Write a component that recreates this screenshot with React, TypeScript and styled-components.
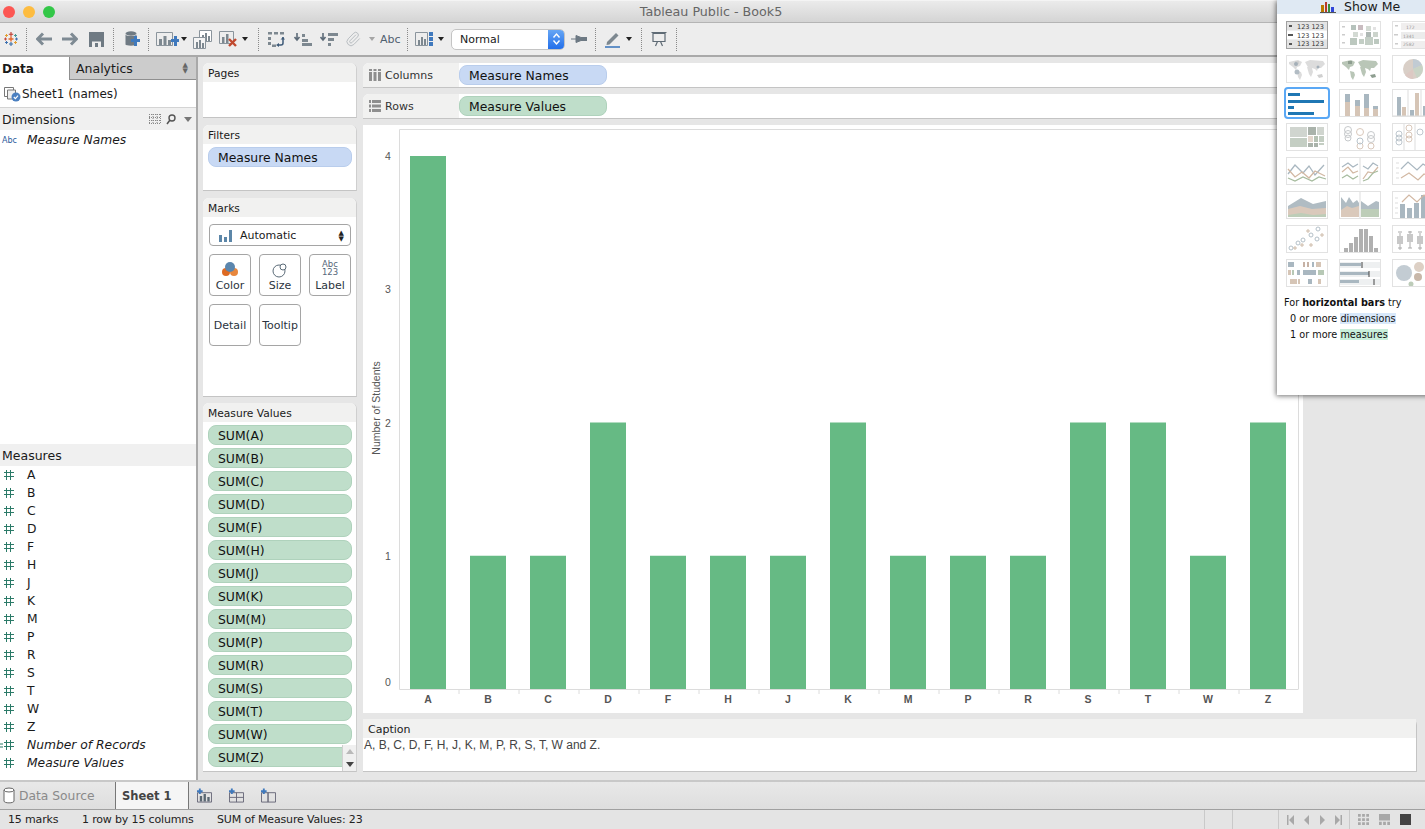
import React from "react";
import styled, { createGlobalStyle } from "styled-components";
import { Paperclip } from "lucide-react";

const Global = createGlobalStyle`
  html, body { margin: 0; padding: 0; height: 100%; overflow: hidden; }
  body { font-family: "DejaVu Sans", "Liberation Sans", sans-serif; color: #1a1a1a; background: #e6e6e6; }
  * { box-sizing: border-box; }
`;

const Page = styled.div`
  position: relative;
  width: 1425px;
  height: 829px;
  display: flex;
  flex-direction: column;
  overflow: hidden;
  background: #e6e6e6;
`;

const TitleBar = styled.div`
  height: 23px;
  flex: none;
  display: flex;
  align-items: center;
  justify-content: center;
  position: relative;
  padding-right: 3px;
  background: linear-gradient(#ebebeb, #d4d4d4);
  border-top: 1px solid #f4f4f4;
  border-bottom: 1px solid #b4b4b4;
  font-size: 12.7px;
  color: #666;
`;
const Lights = styled.div`
  position: absolute;
  left: 3px;
  top: 5px;
  display: flex;
  gap: 8px;
`;
const Light = styled.span<{ $c: string }>`
  width: 12px;
  height: 12px;
  border-radius: 50%;
  background: ${(p) => p.$c};
`;

const Toolbar = styled.div`
  height: 34px;
  flex: none;
  display: flex;
  align-items: center;
  padding-left: 3px;
  background: #ededed;
  border-bottom: 2px solid #a9a9a9;
`;
const Tool = styled.svg<{ $ml?: number }>`
  flex: none;
  margin-left: ${(p) => p.$ml ?? 0}px;
`;
const ClipTool = styled(Paperclip)`
  flex: none;
  margin-left: 7px;
  color: #b4b9bd;
`;
const Sep = styled.span<{ $ml: number }>`
  flex: none;
  width: 0;
  height: 23px;
  margin-left: ${(p) => p.$ml}px;
  border-left: 1px dotted #8a8a8a;
`;
const Caret = styled.span<{ $ml: number; $c?: string }>`
  flex: none;
  width: 0;
  height: 0;
  margin-left: ${(p) => p.$ml}px;
  border-left: 3.5px solid transparent;
  border-right: 3.5px solid transparent;
  border-top: 4px solid ${(p) => p.$c ?? "#222"};
`;
const AbcTool = styled.span`
  flex: none;
  margin-left: 5px;
  font-size: 11px;
  color: #50606f;
  width: 27px;
`;
const FitSelect = styled.div`
  flex: none;
  margin-left: 7px;
  width: 114px;
  height: 21px;
  display: flex;
  align-items: center;
  justify-content: space-between;
  background: #fff;
  border: 1px solid #c4c4c4;
  border-radius: 5px;
  font-size: 11px;
  padding-left: 8px;
  overflow: hidden;
`;
const FitStepper = styled.span`
  width: 17px;
  height: 21px;
  margin-right: -1px;
  background: linear-gradient(#6aa9f5, #1f6cea);
  display: flex;
  align-items: center;
  justify-content: center;
`;

const Body = styled.div`
  flex: 1;
  min-height: 0;
  display: flex;
`;

const Side = styled.div`
  width: 198px;
  flex: none;
  display: flex;
  flex-direction: column;
  background: #fff;
  border-right: 2px solid #a9a9a9;
`;
const Tabs = styled.div`
  height: 23px;
  flex: none;
  display: flex;
  background: #b9b9b9;
`;
const DataTab = styled.div`
  width: 69px;
  background: #fff;
  font-weight: 700;
  font-size: 12px;
  padding: 5px 0 0 2px;
`;
const AnalyticsTab = styled.div`
  flex: 1;
  display: flex;
  justify-content: space-between;
  font-size: 12.5px;
  padding: 4px 8px 0 6px;
  background: #cccccc;
  border-left: 1px solid #8f8f8f;
  border-bottom: 1px solid #8f8f8f;
`;
const UpDown = styled.span`
  font-size: 7px;
  line-height: 6px;
  color: #666;
  margin-top: 1px;
  white-space: pre;
`;
const SourceRow = styled.div`
  height: 28px;
  flex: none;
  display: flex;
  align-items: center;
  gap: 1px;
  padding: 0 0 0 3px;
  font-size: 12px;
  border-bottom: 1px solid #d4d4d4;
`;
const SectionHead = styled.div`
  height: 22px;
  flex: none;
  display: flex;
  align-items: center;
  padding-left: 2px;
  background: #f0f0f0;
  font-size: 12.5px;
  gap: 5px;
`;
const HeadGrow = styled.span`
  flex: 1;
`;
const DimList = styled.div`
  height: 314px;
  flex: none;
  padding-top: 1px;
`;
const FieldRow = styled.div`
  height: 18px;
  display: flex;
  align-items: center;
  font-size: 12.3px;
`;
const FieldIcon = styled.span`
  width: 27px;
  flex: none;
  padding-left: 3px;
  display: flex;
  align-items: center;
`;
const RecordIcon = styled(FieldIcon)`
  padding-left: 0;
`;
const AbcMark = styled.span`
  font-size: 8px;
  margin-left: -1px;
  color: #2a5a9b;
`;
const FieldName = styled.span<{ $i?: boolean }>`
  font-style: ${(p) => (p.$i ? "italic" : "normal")};
`;

const ShelvesCol = styled.div`
  width: 165px;
  flex: none;
  display: flex;
  flex-direction: column;
  padding: 6px 6px 0 5px;
  background: #e6e6e6;
`;
const Card = styled.div<{ $h: number; $mt: number }>`
  height: ${(p) => p.$h}px;
  margin-top: ${(p) => p.$mt}px;
  flex: none;
  background: #fff;
  border-radius: 6px 6px 0 0;
  border-right: 1px solid #cfcfcf;
  border-bottom: 1px solid #c4c4c4;
  overflow: hidden;
  position: relative;
`;
const CardHead = styled.div`
  height: 19px;
  background: #f1f1f0;
  font-size: 10.7px;
  padding: 4px 0 0 5px;
`;
const Pill = styled.div<{ $blue?: boolean; $w?: number }>`
  width: ${(p) => (p.$w ? `${p.$w}px` : "144px")};
  height: 20px;
  flex: none;
  border-radius: 8px;
  display: flex;
  align-items: center;
  padding-left: 9px;
  font-size: 12.4px;
  color: #111;
  background: ${(p) => (p.$blue ? "#c8d9f4" : "#bfdeca")};
  border: 1px solid ${(p) => (p.$blue ? "#b9cdec" : "#afd2bc")};
`;
const FilterBody = styled.div`
  padding: 3px 0 0 5px;
`;
const MarksBody = styled.div`
  padding: 7px 5px 0 6px;
  display: flex;
  flex-direction: column;
`;
const MarkType = styled.div`
  width: 142px;
  height: 22px;
  border: 1px solid #a5a5a5;
  border-radius: 4px;
  display: flex;
  align-items: center;
  padding: 1px 6px 0 9px;
  font-size: 11px;
  gap: 8px;
`;
const MarkGrid = styled.div`
  display: grid;
  grid-template-columns: repeat(3, 42px);
  grid-auto-rows: 42px;
  gap: 8px;
  margin-top: 8px;
`;
const MarkBtn = styled.div`
  border: 1px solid #a5a5a5;
  border-radius: 4px;
  display: flex;
  flex-direction: column;
  align-items: center;
  justify-content: flex-end;
  padding-bottom: 3px;
  font-size: 11px;
  color: #2b3440;
  white-space: nowrap;
`;
const MarkBtnPlain = styled(MarkBtn)`
  justify-content: center;
  padding-bottom: 0;
`;
const AbcStack = styled.span`
  font-size: 8.5px;
  line-height: 8px;
  text-align: center;
  color: #56677a;
  margin-bottom: 3px;
`;
const PillStack = styled.div`
  padding: 3px 0 0 5px;
  display: flex;
  flex-direction: column;
  gap: 3px;
`;
const ScrollBar = styled.div`
  position: absolute;
  right: 0;
  bottom: 0;
  width: 14px;
  height: 26px;
  background: #f0f0f0;
  border-left: 1px solid #d0d0d0;
  display: flex;
  flex-direction: column;
  align-items: center;
  justify-content: space-around;
`;
const Arrow = styled.span<{ $up?: boolean; $c: string }>`
  width: 0;
  height: 0;
  border-left: 4px solid transparent;
  border-right: 4px solid transparent;
  ${(p) => (p.$up ? "border-bottom" : "border-top")}: 5px solid ${(p) => p.$c};
`;

const Main = styled.div`
  flex: 1;
  min-width: 0;
  display: flex;
  flex-direction: column;
  padding: 6px 8px 0 0;
`;
const ShelfBar = styled.div<{ $mt?: number }>`
  height: 25px;
  flex: none;
  margin-top: ${(p) => p.$mt ?? 0}px;
  display: flex;
  align-items: center;
  background: #fff;
  border-bottom: 1px solid #c4c4c4;
  border-radius: 6px 6px 0 0;
`;
const ShelfLabel = styled.div`
  width: 96px;
  height: 100%;
  flex: none;
  background: #f1f1f0;
  display: flex;
  align-items: center;
  padding-left: 6px;
  gap: 4px;
  font-size: 11px;
  color: #333;
  border-radius: 6px 0 0 0;
`;
const ChartBox = styled.div`
  width: 940px;
  height: 588px;
  flex: none;
  margin-top: 6px;
  background: #fff;
`;
const ChartText = styled.text<{ $b?: boolean }>`
  font-family: "Liberation Sans", Arial, sans-serif;
  font-size: 10.5px;
  font-weight: ${(p) => (p.$b ? 700 : 400)};
  fill: #555;
`;
const CaptionCard = styled.div`
  height: 53px;
  flex: none;
  margin-top: 6px;
  background: #fff;
  border-radius: 0 6px 0 0;
  border-right: 1px solid #c4c4c4;
  border-bottom: 1px solid #c4c4c4;
`;
const CaptionHead = styled.div`
  height: 19px;
  background: #f1f1f0;
  font-size: 11px;
  padding: 4px 0 0 5px;
`;
const CaptionText = styled.div`
  font-family: "Liberation Sans", Arial, sans-serif;
  font-size: 12px;
  color: #444;
  padding: 0 0 0 1px;
`;

const TabBar = styled.div`
  height: 30px;
  flex: none;
  display: flex;
  align-items: stretch;
  background: linear-gradient(#e8e8e8, #dedede);
  border-top: 2px solid #c8c8c8;
  border-bottom: 1px solid #a0a0a0;
`;
const SourceTab = styled.div`
  width: 115px;
  display: flex;
  align-items: center;
  gap: 4px;
  padding-left: 3px;
  font-size: 12.3px;
  color: #8a8a8a;
`;
const SheetTab = styled.div`
  width: 74px;
  display: flex;
  align-items: center;
  padding-left: 6px;
  font-size: 11.5px;
  font-weight: 700;
  color: #444;
  background: #f5f5f5;
  border-left: 1px solid #777;
  border-right: 1px solid #777;
`;
const SheetActions = styled.div`
  display: flex;
  align-items: center;
  padding-left: 8px;
  gap: 17px;
`;
const StatusBar = styled.div`
  height: 19px;
  flex: none;
  display: flex;
  align-items: center;
  background: #e4e4e4;
  font-size: 11px;
  color: #222;
  letter-spacing: -0.16px;
`;
const StatusItem = styled.span<{ $w: number; $pl?: number }>`
  width: ${(p) => p.$w}px;
  padding-left: ${(p) => p.$pl ?? 0}px;
  flex: none;
`;
const StatusCell = styled.span<{ $w: number; $pl: number; $gap: number }>`
  width: ${(p) => p.$w}px;
  height: 100%;
  flex: none;
  border-left: 1px solid #c9c9c9;
  display: flex;
  align-items: center;
  padding-left: ${(p) => p.$pl}px;
  gap: ${(p) => p.$gap}px;
`;

const ShowMe = styled.div`
  position: absolute;
  left: 1277px;
  top: 0;
  width: 160px;
  height: 395px;
  background: #fff;
  box-shadow: -1px 1px 5px rgba(0, 0, 0, 0.55);
`;
const ShowMeHead = styled.div`
  height: 14px;
  background: #dfe9f3;
  display: flex;
  align-items: flex-end;
  padding-left: 43px;
  gap: 8px;
  font-size: 12.5px;
  line-height: 15px;
  white-space: nowrap;
`;
const ThumbGrid = styled.div`
  display: grid;
  grid-template-columns: repeat(3, 42px);
  grid-auto-rows: 28px;
  column-gap: 11px;
  row-gap: 6px;
  padding: 7px 0 0 9px;
`;
const Thumb = styled.div<{ $active?: boolean; $first?: boolean }>`
  width: 42px;
  height: 28px;
  background: #fff;
  border: ${(p) => (p.$first ? "1px solid #a0a0a0" : "1px solid #e2e2e2")};
  ${(p) => p.$active && "outline: 2px solid #5aa8f5; outline-offset: 0; border-radius: 2px; border-color: #fff;"}
  overflow: hidden;
`;
const HintBlock = styled.div`
  padding: 8px 0 0 7px;
  font-size: 9.7px;
  line-height: 16px;
  color: #111;
  white-space: nowrap;
`;
const HintLine = styled.div`
  padding-left: 6px;
`;
const DimMark = styled.span`
  background: #d8e8fa;
`;
const MeasMark = styled.span`
  background: #c9eedb;
`;

const Hash = () => (
  <svg width="12" height="12" viewBox="0 0 12 12" style={{ flex: "none" }}>
    <path d="M3.500 1v10M7.500 1v10M1 3.500h10M1 7.500h10" stroke="#2b7a68" strokeWidth="1" fill="none" />
  </svg>
);

const thumbColors = { b: "#a9b7c0", t: "#d6c5b6", g: "#b7c8b5", l: "#d9d9d9" };

const ThumbSvg: React.FC<{ children: React.ReactNode }> = ({ children }) => (
  <svg width={40} height={26} viewBox="0 0 40 26" style={{ display: "block" }}>
    {children}
  </svg>
);

const Continents = ({ c, c2 }: { c: string; c2: string }) => (
  <>
    <path d="M2 6l9-2 4 2-2 4-3 1-1 3-3-3-4-3zM10 15l4 1 1 3-2 5-2-3zM18 6l5-2 13 1 2 3-4 4-3 0-1 3-2-2-3-1-3 1zM20 11l5 1 1 4-2 5-2-3z" fill={c} />
    <path d="M30 19l5-1 1 3-4 1zM8 5l4 0 0 3-4 0z" fill={c2} />
  </>
);

const thumbs: React.ReactNode[] = [
  <ThumbSvg>
    <rect x="0" y="0" width="40" height="8.6" fill="#e4e4e4" />
    <rect x="0" y="17.4" width="40" height="8.6" fill="#e4e4e4" />
    <rect x="2" y="3" width="3" height="2" fill="#555" />
    <rect x="1" y="12" width="5" height="2" fill="#555" />
    <rect x="2" y="21" width="3" height="2" fill="#555" />
    <text x="10" y="7" fontSize="6.5" fill="#333" fontFamily="DejaVu Sans">123 123</text>
    <text x="10" y="15.500" fontSize="6.5" fill="#333" fontFamily="DejaVu Sans">123 123</text>
    <text x="10" y="24" fontSize="6.5" fill="#333" fontFamily="DejaVu Sans">123 123</text>
  </ThumbSvg>,
  <ThumbSvg>
    {[
      [11, 3, 5, "#b6c2bc"], [18, 3, 5, "#c9bcc0"], [26, 4, 5, "#d3dad3"], [33, 5, 3, "#e2e2e2"],
      [13, 10, 5, "#d3dad3"], [20, 11, 3, "#e2e2e2"], [26, 10, 5, "#aeb8b4"], [33, 10, 5, "#ccd4cc"],
      [10, 16, 7, "#bcc8bf"], [19, 17, 5, "#c3cec5"], [25, 15, 8, "#c3cec5"], [34, 17, 5, "#bcc8bf"],
    ].map(([x, y, s, c], i) => (
      <rect key={i} x={x as number} y={y as number} width={s as number} height={s as number} fill={c as string} />
    ))}
    <rect x="2" y="4" width="3" height="1.500" fill="#ccc" />
    <rect x="2" y="12" width="3" height="1.500" fill="#ccc" />
    <rect x="2" y="20" width="3" height="1.500" fill="#ccc" />
  </ThumbSvg>,
  <ThumbSvg>
    <rect x="8" y="1" width="32" height="7" fill="#f0eeee" />
    <rect x="8" y="10" width="32" height="7" fill="#ececec" />
    <rect x="8" y="19" width="32" height="7" fill="#f0eeee" />
    <text x="13" y="7" fontSize="4.5" fill="#999" fontFamily="DejaVu Sans">172</text>
    <text x="10" y="15.500" fontSize="4.5" fill="#999" fontFamily="DejaVu Sans">1341</text>
    <text x="10" y="24" fontSize="4.5" fill="#999" fontFamily="DejaVu Sans">2582</text>
    <rect x="2" y="3" width="3" height="1.500" fill="#ccc" />
    <rect x="1" y="12" width="4" height="1.500" fill="#ccc" />
    <rect x="2" y="21" width="3" height="1.500" fill="#ccc" />
  </ThumbSvg>,
  <ThumbSvg>
    <Continents c="#dcdcdc" c2="#d0d0d0" />
    <circle cx="9" cy="8" r="2" fill="#a4afb8" />
    <circle cx="10" cy="16" r="2.500" fill="#b2bcc4" />
    <circle cx="31" cy="11" r="1.500" fill="#a4afb8" />
  </ThumbSvg>,
  <ThumbSvg>
    <Continents c="#b9c6b7" c2="#8e9e90" />
  </ThumbSvg>,
  <ThumbSvg>
    <circle cx="20" cy="13" r="10" fill="#d9cfc7" />
    <path d="M20 13V3a10 10 0 0 1 9 6z" fill="#c1cbd3" />
    <path d="M20 13l9-4a10 10 0 0 1-5 13z" fill="#c9d4c6" />
    <path d="M20 13v10a10 10 0 0 1-8-4z" fill="#dcc9c3" />
  </ThumbSvg>,
  <ThumbSvg>
    <rect x="1" y="3" width="12" height="3" fill="#1f77b4" />
    <rect x="1" y="10" width="36" height="3" fill="#1f77b4" />
    <rect x="1" y="16" width="6" height="3" fill="#1f77b4" />
    <rect x="1" y="22" width="26" height="3" fill="#1f77b4" />
  </ThumbSvg>,
  <ThumbSvg>
    {[[5, 4, 8, 14], [15, 10, 6, 10], [24, 4, 14, 8], [33, 16, 3, 7]].map(([x, y, a, b], i) => (
      <g key={i}>
        <rect x={x} y={y} width="5" height={a} fill={thumbColors.b} />
        <rect x={x} y={y + a} width="5" height={b} fill={thumbColors.t} />
      </g>
    ))}
  </ThumbSvg>,
  <ThumbSvg>
    <rect x="4" y="7" width="4" height="19" fill={thumbColors.b} />
    <rect x="9" y="17" width="4" height="9" fill={thumbColors.t} />
    <rect x="17" y="20" width="4" height="6" fill={thumbColors.b} />
    <rect x="22" y="3" width="4" height="23" fill={thumbColors.t} />
    <rect x="30" y="16" width="4" height="10" fill={thumbColors.b} />
    <path d="M0 26h40M15 0v26M28 0v26" stroke="#ddd" />
  </ThumbSvg>,
  <ThumbSvg>
    <rect x="3" y="3" width="17" height="10" fill="#d0d5cf" />
    <rect x="21" y="3" width="8" height="8" fill="#aab3ab" />
    <rect x="30" y="3" width="7" height="8" fill="#d0d5cf" />
    <rect x="3" y="14" width="17" height="9" fill="#c4cec3" />
    <rect x="21" y="12" width="5" height="6" fill="#e3d7cd" />
    <rect x="27" y="12" width="4" height="6" fill="#b6c2b4" />
    <rect x="32" y="12" width="5" height="6" fill="#c4cec3" />
    <rect x="21" y="19" width="5" height="4" fill="#aab3ab" />
    <rect x="27" y="19" width="4" height="4" fill="#aab3ab" />
    <rect x="32" y="19" width="5" height="2" fill="#c4cec3" />
  </ThumbSvg>,
  <ThumbSvg>
    <g fill="none" stroke="#c6c9cb" strokeWidth="1">
      <circle cx="8" cy="6" r="3.500" /><circle cx="8" cy="10" r="3.500" /><circle cx="8" cy="14" r="3" />
      <circle cx="31" cy="11" r="3.500" /><circle cx="31" cy="15" r="3.500" />
    </g>
    <g fill="none" stroke="#d9c8bb" strokeWidth="1">
      <circle cx="20" cy="8" r="3.500" /><circle cx="20" cy="22" r="3" /><circle cx="31" cy="22" r="3" />
    </g>
    <circle cx="20" cy="17" r="3" fill="none" stroke="#b8c4cc" />
  </ThumbSvg>,
  <ThumbSvg>
    <g fill="none" stroke="#bfc8cf" strokeWidth="1">
      <circle cx="6" cy="10" r="3" /><circle cx="6" cy="14" r="3" /><circle cx="6" cy="18" r="3" /><circle cx="27" cy="8" r="3" />
    </g>
    <g fill="none" stroke="#d9c8bb" strokeWidth="1">
      <circle cx="16" cy="4" r="3" /><circle cx="16" cy="11" r="3" /><circle cx="16" cy="15" r="3" />
    </g>
    <path d="M11 0v26M22 0v26" stroke="#ddd" />
  </ThumbSvg>,
  <ThumbSvg>
    <path d="M1 16l7-9 8 8 6-7 6 9 9-10" fill="none" stroke={thumbColors.b} strokeWidth="1.300" />
    <path d="M1 11l7 8 7-5 7 6 6-7 10 5" fill="none" stroke="#d2b8a3" strokeWidth="1.300" />
    <path d="M1 20l7 3 8-4 9 4 7-4 7 2" fill="none" stroke="#a7bc9f" strokeWidth="1.300" />
  </ThumbSvg>,
  <ThumbSvg>
    <path d="M20 0v26" stroke="#ddd" />
    <path d="M2 9l6-4 5 4 5-3" fill="none" stroke={thumbColors.b} strokeWidth="1.200" />
    <path d="M2 14l6-5 5 6 5-2" fill="none" stroke="#d2b8a3" strokeWidth="1.200" />
    <path d="M2 20l5-3 6 4 5-3" fill="none" stroke="#a7bc9f" strokeWidth="1.200" />
    <path d="M23 8l5 3 5-6 5 3" fill="none" stroke={thumbColors.b} strokeWidth="1.200" />
    <path d="M23 21l5-7 5 1 5-6" fill="none" stroke="#d2b8a3" strokeWidth="1.200" />
    <path d="M23 23l5-2 5-6 5-2" fill="none" stroke="#a7bc9f" strokeWidth="1.200" />
  </ThumbSvg>,
  <ThumbSvg>
    <path d="M8 11l7-7 9 8 6-6 10 6" fill="none" stroke={thumbColors.b} strokeWidth="1.200" />
    <path d="M8 20l8-5 9 7 6-6 9 4" fill="none" stroke="#d2b8a3" strokeWidth="1.200" />
    <path d="M3 5h3M3 10h3M3 15h3M3 20h3" stroke="#ddd" />
  </ThumbSvg>,
  <ThumbSvg>
    <path d="M1 14l13-8 12 6 13-3v16H1z" fill="#b0bcc3" />
    <path d="M1 17l12-3 12 3 14-1v9H1z" fill="#dac9bb" />
    <path d="M1 23l13-2 12 2 13-1v3H1z" fill="#bdcdb8" />
  </ThumbSvg>,
  <ThumbSvg>
    <path d="M1 5l5 6 3-6 4 6 4-3 2 3v14H1z" fill="#b0bcc3" />
    <path d="M1 18l6-4 5 2 7-2v11H1z" fill="#dac9bb" />
    <path d="M21 9l7 5 8-5 3 1v15H21z" fill="#b0bcc3" />
    <path d="M21 17h18v8H21z" fill="#bdcdb8" />
    <path d="M20 0v26" stroke="#ddd" />
  </ThumbSvg>,
  <ThumbSvg>
    <path d="M2 6h3M2 11h3M2 16h3M2 21h3" stroke="#ddd" />
    <rect x="7" y="12" width="5" height="14" fill="#a9b7c0" />
    <rect x="14" y="16" width="5" height="10" fill="#a9b7c0" />
    <rect x="21" y="11" width="5" height="15" fill="#a9b7c0" />
    <rect x="28" y="3" width="5" height="23" fill="#a9b7c0" />
    <path d="M9 10l7-7 8 7 7-7 8 7" fill="none" stroke="#d2b8a3" strokeWidth="1.200" />
  </ThumbSvg>,
  <ThumbSvg>
    <g fill="none" stroke="#b4c0c8">
      <circle cx="4" cy="22" r="2" /><circle cx="11" cy="17" r="2" /><circle cx="16" cy="14" r="2" />
      <circle cx="24" cy="9" r="2" /><circle cx="30" cy="13" r="2" /><circle cx="31" cy="3" r="2" />
    </g>
    <path d="M6 22h4M8 20v4M13 19h4M15 17v4M22 19h4M24 17v4M19 5h4M21 3v4M33 9h4M35 7v4" stroke="#cdbba9" fill="none" />
  </ThumbSvg>,
  <ThumbSvg>
    {[[6, 22], [11, 17], [16, 11], [21, 3], [26, 3], [31, 10], [36, 22]].map(([x, y], i) => (
      <rect key={i} x={x - 2} y={y} width="4" height={26 - y} fill="#b0b0b0" />
    ))}
  </ThumbSvg>,
  <ThumbSvg>
    {[7, 17, 27, 37].map((x, i) => (
      <g key={x}>
        <path d={`M${x} ${i % 2 ? 5 : 7}v17M${x - 2} 6h4M${x - 2} 22h4`} stroke="#aaa" />
        <rect x={x - 3} y={i % 2 ? 8 : 10} width="6" height="8" fill="#c8c8c8" />
      </g>
    ))}
  </ThumbSvg>,
  <ThumbSvg>
    {[
      [1, 2, 6, "#a9b7c0"], [16, 2, 2, "#c7b2a5"], [20, 2, 2, "#c7b2a5"], [25, 2, 2, "#a9b7c0"], [29, 2, 5, "#d6c5b6"],
      [1, 10, 3, "#d6c5b6"], [5, 10, 2, "#b7c8b5"], [10, 10, 3, "#a9b7c0"], [16, 10, 13, "#a9b7c0"], [31, 10, 6, "#b7c8b5"],
      [3, 19, 7, "#d6c5b6"], [11, 19, 2, "#d6c5b6"], [21, 19, 4, "#a9b7c0"], [31, 19, 3, "#d6c5b6"],
    ].map(([x, y, w, c], i) => (
      <rect key={i} x={x as number} y={y as number} width={w as number} height="5" fill={c as string} />
    ))}
  </ThumbSvg>,
  <ThumbSvg>
    <rect x="0" y="2" width="40" height="6" fill="#eef0f1" />
    <rect x="0" y="11" width="40" height="6" fill="#eef0f1" />
    <rect x="0" y="19" width="40" height="6" fill="#eef0f1" />
    <rect x="0" y="3" width="21" height="3" fill="#a9b7c0" />
    <rect x="0" y="12" width="29" height="3" fill="#a9b7c0" />
    <rect x="0" y="20" width="19" height="3" fill="#a9b7c0" />
    <path d="M22 2v6M29 11v6M34 19v6" stroke="#444" />
  </ThumbSvg>,
  <ThumbSvg>
    <circle cx="11" cy="13" r="8" fill="#c3ccd3" />
    <circle cx="26" cy="7" r="5" fill="#ddd0c5" />
    <circle cx="25" cy="17" r="4" fill="#c8b7a9" />
    <circle cx="18" cy="24" r="2.500" fill="#bdccb9" />
    <circle cx="36" cy="13" r="4" fill="#bdccb9" />
  </ThumbSvg>,
];

const chartData: [string, number][] = [
  ["A", 4], ["B", 1], ["C", 1], ["D", 2], ["F", 1], ["H", 1], ["J", 1], ["K", 2],
  ["M", 1], ["P", 1], ["R", 1], ["S", 2], ["T", 2], ["W", 1], ["Z", 2],
];
const measures = ["A", "B", "C", "D", "F", "H", "J", "K", "M", "P", "R", "S", "T", "W", "Z"];

const Chart = () => {
  const y0 = 564;
  const unit = 133.25;
  return (
    <svg width="940" height="588" viewBox="0 0 940 588" style={{ display: "block" }}>
      <path d="M36.500 4.500H935.500V564M36.500 4.500V564.500H935.500" fill="none" stroke="#dcdcdc" />
      {chartData.map(([l, v], i) => (
        <g key={l}>
          <rect x={47 + i * 60} y={y0 - v * unit} width="36" height={v * unit} fill="#66ba84" />
          <ChartText $b x={65 + i * 60} y={578} textAnchor="middle">{l}</ChartText>
          {i > 0 && <path d={`M${36 + i * 60} 564v5`} stroke="#dcdcdc" />}
        </g>
      ))}
      {[0, 1, 2, 3, 4].map((t) => (
        <ChartText key={t} x={25} y={t === 0 ? 561 : y0 - t * unit + 4} textAnchor="middle">{t}</ChartText>
      ))}
      <ChartText x={0} y={0} textAnchor="middle" transform="translate(17 283) rotate(-90)">Number of Students</ChartText>
    </svg>
  );
};

const App: React.FC = () => (
  <Page>
    <Global />
    <TitleBar>
      <Lights>
        <Light $c="#fc5753" />
        <Light $c="#fdbc40" />
        <Light $c="#33c748" />
      </Lights>
      Tableau Public - Book5
    </TitleBar>
    <Toolbar>
      <Tool width="16" height="16" viewBox="0 0 16 16">
        <path d="M8 1v4.500M5.800 3.200h4.400" stroke="#c0392b" strokeWidth="1.100" />
        <path d="M3.500 3v3M2 4.500h3" stroke="#e3a032" strokeWidth="1" />
        <path d="M12.500 3v3M11 4.500h3" stroke="#4a9a94" strokeWidth="1" />
        <path d="M8 5.500v5M5.500 8h5" stroke="#e8682a" strokeWidth="1.400" />
        <path d="M2.500 6.500v3M1 8h3" stroke="#c44a3a" strokeWidth="1" />
        <path d="M13.500 6.500v3M12 8h3" stroke="#3f72b0" strokeWidth="1" />
        <path d="M3.500 10v3M2 11.500h3" stroke="#3f72b0" strokeWidth="1" />
        <path d="M12.500 10v3M11 11.500h3" stroke="#e3a032" strokeWidth="1" />
        <path d="M8 11v4M6 13h4" stroke="#3a6fa8" strokeWidth="1.100" />
      </Tool>
      <Sep $ml={7} />
      <Tool $ml={9} width="16" height="14" viewBox="0 0 16 14">
        <path d="M7 1.500L1.500 7 7 12.500M2 7h14" fill="none" stroke="#7e8a93" strokeWidth="3" />
      </Tool>
      <Tool $ml={10} width="16" height="14" viewBox="0 0 16 14">
        <path d="M9 1.500L14.500 7 9 12.500M14 7H0" fill="none" stroke="#7e8a93" strokeWidth="3" />
      </Tool>
      <Tool $ml={11} width="15" height="15" viewBox="0 0 15 15">
        <path d="M0 0h15v15H0z" fill="#6f7a83" />
        <path d="M3 9.500h9V15H3z" fill="#eee" />
        <path d="M6 11h3v4H6z" fill="#6f7a83" />
      </Tool>
      <Sep $ml={9} />
      <Tool $ml={11} width="15" height="17" viewBox="0 0 15 17">
        <ellipse cx="6" cy="2.500" rx="5.500" ry="2.200" fill="#6f7a83" />
        <path d="M.5 3.500v10c0 1.500 11 1.500 11 0v-10c-1 2-10 2-11 0z" fill="#6f7a83" />
        <path d="M9 8V5h3v3h3v3h-3v4H9v-4H6V8z" fill="#3f79bd" />
      </Tool>
      <Sep $ml={8} />
      <Tool $ml={7} width="23" height="17" viewBox="0 0 23 17">
        <path d="M.5 1.500h16v13H.5z" fill="none" stroke="#8a949c" />
        <path d="M3 8h3v6H3zM7.500 5h3v9h-3zM12 9h3v5h-3z" fill="#7d8890" />
        <path d="M15 8h3V5h3v3h2v3h-2v4h-3v-4h-3z" fill="#3f79bd" />
      </Tool>
      <Caret $ml={2} />
      <Tool $ml={6} width="19" height="19" viewBox="0 0 19 19">
        <path d="M6.500.5h12v11h-12z" fill="#fff" stroke="#8a949c" />
        <path d="M9 5h2v6H9zM12 3h2v8h-2zM15 6h2v5h-2z" fill="#7d8890" />
        <path d="M.5 7.500h12v11H.5z" fill="#f4f4f4" stroke="#8a949c" />
        <path d="M3 12h2v6H3zM6 10h2v8H6zM9 13h2v5H9z" fill="#7d8890" />
      </Tool>
      <Tool $ml={7} width="19" height="18" viewBox="0 0 19 18">
        <path d="M.5 1.500h14v12H.5z" fill="none" stroke="#8a949c" />
        <path d="M3 7h2.500v6H3zM7 4h2.500v9H7z" fill="#7d8890" />
        <path d="M10 9l7 7M17 9l-7 7" stroke="#c0492f" strokeWidth="2.400" />
      </Tool>
      <Caret $ml={4} />
      <Sep $ml={10} />
      <Tool $ml={8} width="18" height="17" viewBox="0 0 18 17">
        <path d="M1 1h4v2.500H1zM7 1h4v2.500H7zM13 1h4v2.500h-4zM1 6h3v3H1zM1 11h3v3H1zM5 13.500h4v2.500H5z" fill="#7d8890" />
        <path d="M16 6v6c0 1-1 2-2 2h-3" fill="none" stroke="#3e5a78" strokeWidth="1.500" />
        <path d="M13.500 8.500l2.500-2.500 2 2.500zM9 14l3-2v4z" fill="#3e5a78" />
      </Tool>
      <Tool $ml={9} width="18" height="15" viewBox="0 0 18 15">
        <path d="M3 1v7M0.500 5L3 8l2.500-3" fill="none" stroke="#5d6b78" strokeWidth="1.600" />
        <path d="M8 2h3v3H8zM8 7h6v3H8zM8 11h10v3H8z" fill="#7d8890" />
      </Tool>
      <Tool $ml={8} width="18" height="15" viewBox="0 0 18 15">
        <path d="M3 1v7M0.500 5L3 8l2.500-3" fill="none" stroke="#5d6b78" strokeWidth="1.600" />
        <path d="M8 1h10v3H8zM8 6h6v3H8zM8 11h3v3H8z" fill="#7d8890" />
      </Tool>
      <ClipTool size={16} strokeWidth={1.4} />
      <Caret $ml={8} $c="#a5a5a5" />
      <AbcTool>Abc</AbcTool>
      <Sep $ml={0} />
      <Tool $ml={7} width="19" height="16" viewBox="0 0 19 16">
        <path d="M.5 1.500h12v13H.5z" fill="none" stroke="#8a949c" />
        <path d="M3 9h2v5H3zM6 6h2v8H6zM9 8h2v6H9z" fill="#7d8890" />
        <path d="M14 1h4v4h-4zM14 6h4v4h-4zM14 11h4v4h-4z" fill="#3f79bd" />
      </Tool>
      <Caret $ml={4} />
      <FitSelect>
        Normal
        <FitStepper>
          <svg width="9" height="14" viewBox="0 0 9 14">
            <path d="M1.500 5.500L4.500 2l3 3.500M1.500 8.500l3 3.500 3-3.500" fill="none" stroke="#fff" strokeWidth="1.400" />
          </svg>
        </FitStepper>
      </FitSelect>
      <Tool $ml={6} width="16" height="10" viewBox="0 0 16 10">
        <path d="M0 5h5M5 1.500l5 2h6v3h-6l-5 2z" fill="#6d7983" stroke="#6d7983" />
      </Tool>
      <Sep $ml={8} />
      <Tool $ml={9} width="17" height="17" viewBox="0 0 17 17">
        <path d="M2 11L11 2l2.500 2.500-9 9-3 .5z" fill="#7d8890" />
        <path d="M0 16h15" stroke="#3f79bd" strokeWidth="1.600" />
      </Tool>
      <Caret $ml={4} />
      <Sep $ml={9} />
      <Tool $ml={9} width="16" height="15" viewBox="0 0 16 15">
        <path d="M.5.500h15M2 1.500h12v8H2zM4.500 14l2-4.500M11.500 14l-2-4.500" fill="none" stroke="#5f6b75" strokeWidth="1.200" />
      </Tool>
      <Sep $ml={9} />
    </Toolbar>
    <Body>
      <Side>
        <Tabs>
          <DataTab>Data</DataTab>
          <AnalyticsTab>
            Analytics
            <UpDown>{"▲\n▼"}</UpDown>
          </AnalyticsTab>
        </Tabs>
        <SourceRow>
          <svg width="18" height="16" viewBox="0 0 18 16">
            <path d="M1.500 1.500h9v9h-9z" fill="#fff" stroke="#777" />
            <path d="M4.500 4h8v9h-8z" fill="#eee" stroke="#777" />
            <circle cx="13" cy="11" r="4.500" fill="#4a7fc0" />
            <path d="M10.800 11l1.600 1.600 2.600-3" fill="none" stroke="#fff" strokeWidth="1.100" />
          </svg>
          Sheet1 (names)
        </SourceRow>
        <SectionHead>
          Dimensions
          <HeadGrow />
          <svg width="12" height="10" viewBox="0 0 12 10">
            <path d="M0 .5h12M0 3.500h12M0 6.500h12M0 9.500h12M.5 0v10M4 0v10M8 0v10M11.500 0v10" stroke="#888" strokeDasharray="1 1" fill="none" />
          </svg>
          <svg width="10" height="11" viewBox="0 0 10 11">
            <circle cx="6" cy="4" r="3" fill="none" stroke="#555" strokeWidth="1.400" />
            <path d="M4 6L1 10" stroke="#555" strokeWidth="1.600" />
          </svg>
          <svg width="8" height="5" viewBox="0 0 8 5" style={{ marginRight: 4, marginLeft: 3 }}>
            <path d="M0 0h8L4 5z" fill="#777" />
          </svg>
        </SectionHead>
        <DimList>
          <FieldRow>
            <FieldIcon>
              <AbcMark>Abc</AbcMark>
            </FieldIcon>
            <FieldName $i>Measure Names</FieldName>
          </FieldRow>
        </DimList>
        <SectionHead>Measures</SectionHead>
        {measures.map((m) => (
          <FieldRow key={m}>
            <FieldIcon>
              <Hash />
            </FieldIcon>
            <FieldName>{m}</FieldName>
          </FieldRow>
        ))}
        <FieldRow>
          <RecordIcon>
            <svg width="3" height="5" viewBox="0 0 3 5" style={{ flex: "none" }}>
              <path d="M0 1h3M0 4h3" stroke="#2b7a68" />
            </svg>
            <Hash />
          </RecordIcon>
          <FieldName $i>Number of Records</FieldName>
        </FieldRow>
        <FieldRow>
          <FieldIcon>
            <Hash />
          </FieldIcon>
          <FieldName $i>Measure Values</FieldName>
        </FieldRow>
      </Side>
      <ShelvesCol>
        <Card $h={55} $mt={0}>
          <CardHead>Pages</CardHead>
        </Card>
        <Card $h={66} $mt={7}>
          <CardHead>Filters</CardHead>
          <FilterBody>
            <Pill $blue>Measure Names</Pill>
          </FilterBody>
        </Card>
        <Card $h={199} $mt={7}>
          <CardHead>Marks</CardHead>
          <MarksBody>
            <MarkType>
              <svg width="13" height="12" viewBox="0 0 13 12">
                <path d="M0 5h3v7H0zM5 7h3v5H5zM10 0h3v12h-3z" fill="#5c86a8" />
              </svg>
              Automatic
              <HeadGrow />
              <UpDown style={{ color: "#222" }}>{"▲\n▼"}</UpDown>
            </MarkType>
            <MarkGrid>
              <MarkBtn>
                <svg width="16" height="15" viewBox="0 0 16 15" style={{ marginBottom: 2 }}>
                  <circle cx="4" cy="10" r="4" fill="#dd6a23" />
                  <circle cx="12" cy="10" r="4" fill="#e8873d" />
                  <circle cx="8" cy="5" r="5" fill="#5b86ad" />
                </svg>
                Color
              </MarkBtn>
              <MarkBtn>
                <svg width="16" height="16" viewBox="0 0 16 16" style={{ marginBottom: 1 }}>
                  <circle cx="7" cy="9" r="6" fill="none" stroke="#5b6b78" />
                  <circle cx="11" cy="5" r="3" fill="#fff" stroke="#5b6b78" />
                </svg>
                Size
              </MarkBtn>
              <MarkBtn>
                <AbcStack>
                  Abc
                  <br />
                  123
                </AbcStack>
                Label
              </MarkBtn>
              <MarkBtnPlain>Detail</MarkBtnPlain>
              <MarkBtnPlain>Tooltip</MarkBtnPlain>
            </MarkGrid>
          </MarksBody>
        </Card>
        <Card $h={369} $mt={6}>
          <CardHead>Measure Values</CardHead>
          <PillStack>
            {measures.map((m) => (
              <Pill key={m}>{`SUM(${m})`}</Pill>
            ))}
          </PillStack>
          <ScrollBar>
            <Arrow $up $c="#b9b9b9" />
            <Arrow $c="#444" />
          </ScrollBar>
        </Card>
      </ShelvesCol>
      <Main>
        <ShelfBar>
          <ShelfLabel>
            <svg width="12" height="12" viewBox="0 0 12 12">
              <path d="M0 0h3v12H0zM4.500 0h3v12h-3zM9 0h3v12H9z" fill="#8f8f8f" />
              <path d="M0 2.500h12" stroke="#f1f1f0" />
            </svg>
            Columns
          </ShelfLabel>
          <Pill $blue $w={148}>Measure Names</Pill>
        </ShelfBar>
        <ShelfBar $mt={6}>
          <ShelfLabel>
            <svg width="12" height="12" viewBox="0 0 12 12">
              <path d="M0 0h12v3H0zM0 4.500h12v3H0zM0 9h12v3H0z" fill="#8f8f8f" />
              <path d="M2.500 0v12" stroke="#f1f1f0" />
            </svg>
            Rows
          </ShelfLabel>
          <Pill $w={148}>Measure Values</Pill>
        </ShelfBar>
        <ChartBox>
          <Chart />
        </ChartBox>
        <CaptionCard>
          <CaptionHead>Caption</CaptionHead>
          <CaptionText>A, B, C, D, F, H, J, K, M, P, R, S, T, W and Z.</CaptionText>
        </CaptionCard>
      </Main>
    </Body>
    <TabBar>
      <SourceTab>
        <svg width="12" height="17" viewBox="0 0 12 17">
          <path d="M1 3v11c0 2.500 10 2.500 10 0V3" fill="#fff" stroke="#666" />
          <ellipse cx="6" cy="3" rx="5" ry="2" fill="#fff" stroke="#666" />
        </svg>
        Data Source
      </SourceTab>
      <SheetTab>Sheet 1</SheetTab>
      <SheetActions>
        <svg width="15" height="15" viewBox="0 0 16 15">
          <path d="M.5 4.500h15v10H.5z" fill="none" stroke="#667" />
          <path d="M3 8h2.500v6H3zM7 6h2.500v8H7zM11 9h2.500v5H11z" fill="#5a6772" />
          <path d="M2 0h2v2h2v2H4v2H2V4H0V2h2z" fill="#3f79bd" />
        </svg>
        <svg width="15" height="15" viewBox="0 0 16 15">
          <path d="M.5 4.500h15v10H.5zM.5 9.500h15M8 4.500v10" fill="none" stroke="#667" />
          <path d="M2 0h2v2h2v2H4v2H2V4H0V2h2z" fill="#3f79bd" />
        </svg>
        <svg width="15" height="15" viewBox="0 0 16 15">
          <path d="M.5 4.500h7v10h-7zM7.500 4.500h8v10h-8z" fill="none" stroke="#667" />
          <path d="M2 0h2v2h2v2H4v2H2V4H0V2h2z" fill="#3f79bd" />
        </svg>
      </SheetActions>
    </TabBar>
    <StatusBar>
      <StatusItem $w={82} $pl={8}>15 marks</StatusItem>
      <StatusItem $w={135}>1 row by 15 columns</StatusItem>
      <StatusItem $w={987}>SUM of Measure Values: 23</StatusItem>
      <StatusCell $w={28} $pl={0} $gap={0} />
      <StatusCell $w={46} $pl={0} $gap={0} />
      <StatusCell $w={71} $pl={8} $gap={0}>
        <svg width="55" height="10" viewBox="0 0 55 10">
          <path d="M0 0h1.500v10H0zM7 0v10L2 5zM22 0v10l-5-5zM33 0v10l5-5zM48 0v10l5-5zM53.500 0H55v10h-1.500z" fill="#a8a8a8" />
        </svg>
      </StatusCell>
      <StatusCell $w={76} $pl={8} $gap={10}>
        <svg width="11" height="11" viewBox="0 0 12 12">
          <path d="M0 0h3v3H0zM4.500 0h3v3h-3zM9 0h3v3H9zM0 4.500h3v3H0zM4.500 4.500h3v3h-3zM9 4.500h3v3H9zM0 9h3v3H0zM4.500 9h3v3h-3zM9 9h3v3H9z" fill="#a8a8a8" />
        </svg>
        <svg width="11" height="11" viewBox="0 0 12 12">
          <path d="M0 0h12v7H0zM0 8.500h3V12H0zM4.500 8.500h3V12h-3zM9 8.500h3V12H9z" fill="#a8a8a8" />
        </svg>
        <svg width="11" height="11" viewBox="0 0 12 12">
          <path d="M0 0h12v12H0z" fill="#444" />
        </svg>
      </StatusCell>
    </StatusBar>
    <ShowMe>
      <ShowMeHead>
        <svg width="16" height="11" viewBox="0 0 16 11" style={{ flex: "none", marginBottom: 1 }}>
          <path d="M1 3h3v7H1z" fill="#b97a00" />
          <path d="M5 0h2v10H5z" fill="#b83b2a" />
          <path d="M8 2h2v8H8z" fill="#3a8f3a" />
          <path d="M11 5h3v5h-3z" fill="#2f45d8" />
          <path d="M0 10.500h16" stroke="#555" />
        </svg>
        Show Me
      </ShowMeHead>
      <ThumbGrid>
        {thumbs.map((t, i) => (
          <Thumb key={i} $active={i === 6} $first={i === 0}>
            {t}
          </Thumb>
        ))}
      </ThumbGrid>
      <HintBlock>
        <div>
          For <b>horizontal bars</b> try
        </div>
        <HintLine>
          0 or more <DimMark>dimensions</DimMark>
        </HintLine>
        <HintLine>
          1 or more <MeasMark>measures</MeasMark>
        </HintLine>
      </HintBlock>
    </ShowMe>
  </Page>
);

export default App;
